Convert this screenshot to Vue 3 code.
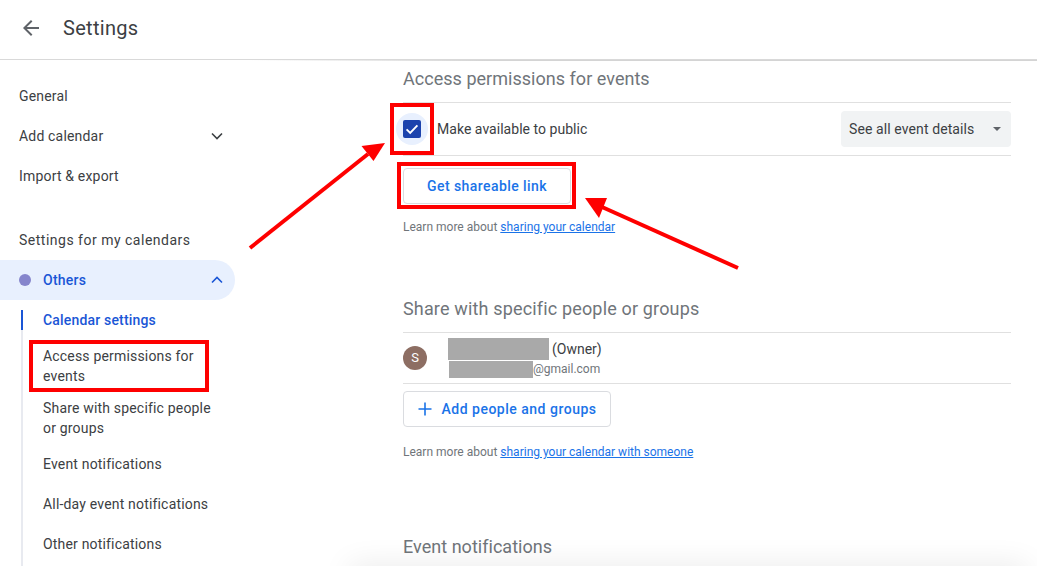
<script setup>
const topItems = [
  { label: 'General' },
  { label: 'Add calendar', chevron: true },
  { label: 'Import & export' },
]
const subItems = [
  { label: 'Calendar settings', active: true },
  { label: 'Access permissions for events', tall: true },
  { label: 'Share with specific people or groups', tall: true },
  { label: 'Event notifications' },
  { label: 'All-day event notifications' },
  { label: 'Other notifications' },
]
</script>

<template>
  <div class="page">
    <header class="header">
      <svg class="back" width="24" height="24" viewBox="0 0 24 24"><path d="M20 11H7.83l5.59-5.59L12 4l-8 8 8 8 1.41-1.41L7.83 13H20z" fill="#5f6368"/></svg>
      <h1 class="title">Settings</h1>
    </header>
    <div class="body">
      <nav class="side">
        <div v-for="item in topItems" :key="item.label" class="nav-item">
          <span>{{ item.label }}</span>
          <svg v-if="item.chevron" class="chev" width="12" height="8" viewBox="0 0 12 8"><path d="M1 1.500l5 5 5-5" fill="none" stroke="#3c4043" stroke-width="1.6"/></svg>
        </div>
        <div class="side-head">Settings for my calendars</div>
        <div class="pill">
          <span class="dot"></span>
          <span class="pill-label">Others</span>
          <svg class="chev" width="12" height="8" viewBox="0 0 12 8"><path d="M1 6.500l5-5 5 5" fill="none" stroke="#1a56d6" stroke-width="1.6"/></svg>
        </div>
        <div class="subnav">
          <div v-for="item in subItems" :key="item.label" class="sub-item" :class="{ active: item.active, tall: item.tall }">{{ item.label }}</div>
        </div>
      </nav>
      <main class="main">
        <section class="access">
          <h2 class="sec-title">Access permissions for events</h2>
          <div class="row">
            <span class="check-halo">
              <span class="check">
                <svg width="18" height="18" viewBox="0 0 18 18"><path d="M3.600 9.400l3.600 3.500 7.200-7.600" fill="none" stroke="#fff" stroke-width="1.9"/></svg>
              </span>
            </span>
            <span class="row-label">Make available to public</span>
            <div class="select">
              <span>See all event details</span>
              <span class="caret"></span>
            </div>
          </div>
          <button class="btn link-btn">Get shareable link</button>
          <p class="learn">Learn more about <a class="link">sharing your calendar</a></p>
        </section>
        <section class="share">
          <h2 class="sec-title wide">Share with specific people or groups</h2>
          <div class="person">
            <span class="avatar">S</span>
            <div class="person-text">
              <div class="name"><span class="redact r1"></span><span>(Owner)</span></div>
              <div class="mail"><span class="redact r2"></span><span>@gmail.com</span></div>
            </div>
          </div>
          <button class="btn add-btn">
            <svg width="14" height="14" viewBox="0 0 14 14"><path d="M7 0.500v13M0.500 7h13" stroke="#1a73e8" stroke-width="1.6"/></svg>
            <span>Add people and groups</span>
          </button>
          <p class="learn">Learn more about <a class="link">sharing your calendar with someone</a></p>
        </section>
        <section class="events">
          <h2 class="sec-title">Event notifications</h2>
        </section>
      </main>
    </div>
    <div class="fade"></div>
    <svg class="marks" width="1037" height="566" viewBox="0 0 1037 566">
      <g fill="none" stroke="#fe0000" stroke-width="4">
        <rect x="31" y="342" width="176" height="48"/>
        <rect x="392" y="105" width="40" height="48"/>
        <rect x="399" y="164" width="175" height="43"/>
        <path d="M250 248L368 154"/>
        <path d="M738 268L602 207"/>
      </g>
      <path d="M385 143L361.500 146 373.500 161z" fill="#fe0000"/>
      <path d="M585 198L599 218 607 198z" fill="#fe0000"/>
    </svg>
  </div>
</template>

<style>
html, body { margin: 0; background: #fff; overflow: hidden; }
</style>

<style scoped>
.page {
  position: relative;
  width: 1037px;
  height: 566px;
  overflow: hidden;
  background: #fff;
  font-family: Roboto, "Liberation Sans", sans-serif;
  color: #3c4043;
}
.header {
  position: relative;
  height: 59px;
  box-sizing: content-box;
  display: flex;
  align-items: center;
  padding-left: 19px;
  border-bottom: 1px solid #d9d9d9;
}
.header > * { position: relative; top: -2px; }
.header::after {
  content: "";
  position: absolute;
  left: 250px;
  right: 0;
  bottom: -2px;
  height: 1px;
  background: linear-gradient(90deg, rgba(205,205,205,0), #d4d4d4 30%);
}
.back { margin-right: 20px; }
.title {
  margin: 0;
  font-size: 20px;
  font-weight: 400;
  letter-spacing: 0.3px;
  color: #3c4043;
}
.body { display: flex; height: 506px; overflow: hidden; }
.side {
  width: 403px;
  flex: none;
  display: flex;
  flex-direction: column;
  padding-top: 16px;
  box-sizing: border-box;
  font-size: 14px;
  letter-spacing: 0.18px;
}
.nav-item {
  width: 235px;
  flex: none;
  box-sizing: border-box;
  height: 40px;
  padding: 0 12px 0 19px;
  display: flex;
  align-items: center;
  justify-content: space-between;
}
.side-head { flex: none; margin-top: 24px; padding-left: 19px; height: 40px; line-height: 40px; letter-spacing: 0.5px; }
.pill {
  width: 235px;
  height: 40px;
  flex: none;
  box-sizing: border-box;
  padding: 0 12px 0 19px;
  display: flex;
  align-items: center;
  background: #e8f0fe;
  border-radius: 0 20px 20px 0;
  color: #1a56d6;
}
.dot { width: 12px; height: 12px; border-radius: 50%; background: #8585cc; margin-right: 12px; }
.pill-label { flex: 1; font-weight: 500; letter-spacing: 0.25px; }
.subnav { flex: 1 0 auto; margin: 10px 0 0 21px; border-left: 2px solid #e8eaf0; width: 214px; box-sizing: border-box; }
.sub-item { padding: 0 12px 0 20px; line-height: 20px; margin-bottom: 20px; }
.sub-item.tall { margin-bottom: 12px; }
.sub-item.tall + .sub-item.tall { margin-bottom: 16px; }
.sub-item.active {
  color: #1a56d6;
  font-weight: 500;
  margin-left: -2px;
  padding-left: 20px;
  border-left: 2px solid #1a56d6;
  margin-bottom: 16px;
}
.main { flex: 1; padding-right: 26px; box-sizing: border-box; }
.sec-title {
  margin: 0;
  font-size: 18px;
  font-weight: 400;
  line-height: 24px;
  letter-spacing: 0.03px;
  color: #70757a;
}
.sec-title.wide { letter-spacing: 0.16px; }
.access { padding-top: 7px; }
.row {
  margin-top: 11px;
  height: 52px;
  display: flex;
  align-items: center;
  border-top: 1px solid #e0e0e0;
  border-bottom: 1px solid #e0e0e0;
  font-size: 14px;
  letter-spacing: 0.03px;
}
.check-halo {
  width: 32px;
  height: 32px;
  margin-left: -7px;
  margin-right: 9px;
  border-radius: 50%;
  background: #e8f0fe;
  display: flex;
  align-items: center;
  justify-content: center;
}
.check {
  width: 18px;
  height: 18px;
  background: #1c43ad;
  border-radius: 2px;
  display: flex;
}
.row-label { flex: 1; }
.select {
  width: 170px;
  height: 36px;
  box-sizing: border-box;
  padding: 0 8px;
  background: #f1f3f4;
  border-radius: 4px;
  display: flex;
  align-items: center;
  justify-content: space-between;
  letter-spacing: 0.1px;
}
.caret { width: 0; height: 0; margin-right: 2px; border-left: 4px solid transparent; border-right: 4px solid transparent; border-top: 4px solid #5f6368; }
.btn {
  display: flex;
  align-items: center;
  justify-content: center;
  height: 36px;
  box-sizing: border-box;
  background: #fff;
  border: 1px solid #dadce0;
  border-radius: 4px;
  color: #1a73e8;
  font: 500 14px Roboto, "Liberation Sans", sans-serif;
  letter-spacing: 0.42px;
  padding: 0;
}
.link-btn { width: 168px; margin-top: 12px; }
.learn {
  margin: 14px 0 0;
  line-height: 18px;
  font-size: 12px;
  color: #70757a;
  letter-spacing: 0;
}
.link { color: #1a73e8; text-decoration: underline; }
.share { margin-top: 61px; }
.person {
  margin-top: 11px;
  height: 50px;
  display: flex;
  align-items: center;
  border-top: 1px solid #e0e0e0;
  border-bottom: 1px solid #e0e0e0;
}
.avatar {
  width: 24px;
  height: 24px;
  border-radius: 50%;
  background: #8d6e63;
  color: #fff;
  font-size: 13px;
  line-height: 24px;
  text-align: center;
  margin-right: 21px;
}
.person-text { display: flex; flex-direction: column; }
.name { display: flex; align-items: center; height: 22px; font-size: 14px; gap: 3px; }
.mail { display: flex; align-items: center; height: 18px; margin-left: 1px; font-size: 12px; color: #70757a; }
.redact { display: block; background: #a9a9a9; }
.r1 { width: 101px; height: 22px; }
.r2 { width: 84px; height: 17px; }
.add-btn { width: 208px; margin-top: 7px; gap: 10px; letter-spacing: 0.5px; }
.add-btn + .learn { margin-top: 16px; }
.events { margin-top: 74px; }
.fade {
  position: absolute;
  left: 350px;
  right: 10px;
  bottom: -20px;
  height: 20px;
  box-shadow: 0 0 30px rgba(0,0,0,0.1);
  pointer-events: none;
}
.marks { position: absolute; left: 0; top: 0; pointer-events: none; }
</style>
